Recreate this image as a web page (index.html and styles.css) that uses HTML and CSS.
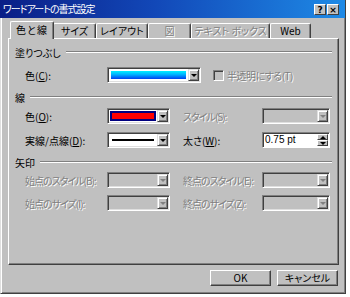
FILE: index.html
```html
<!DOCTYPE html>
<html lang="ja">
<head>
    <meta charset="UTF-8">
    <title>ワードアートの書式設定</title>
    <link rel="stylesheet" href="styles.css">
</head>
<body>

    <div class="dialog">
        <div class="titlebar">
            <span class="title">ワードアートの書式設定</span>
            <div class="title-buttons">
                <span class="tbtn">?</span>
                <span class="tbtn">×</span>
            </div>
        </div>

        <div class="tabs">
            <div class="tab tab-color active">色と線</div>
            <div class="tab tab-size">サイズ</div>
            <div class="tab tab-layout">レイアウト</div>
            <div class="tab tab-pic disabled">図</div>
            <div class="tab tab-text disabled">テキスト ボックス</div>
            <div class="tab tab-web">Web</div>
        </div>

        <div class="panel">
            <!-- 塗りつぶし -->
            <div class="group-head first">塗りつぶし</div>
            <div class="row">
                <span class="lbl">色(<u>C</u>):</span>
                <div class="combo combo-fill">
                    <span class="field"><span class="swatch swatch-fill"></span></span>
                    <span class="drop"><i class="arrow"></i></span>
                </div>
                <span class="check"></span>
                <span class="check-text off">半透明にする(T)</span>
            </div>

            <!-- 線 -->
            <div class="group-head">線</div>
            <div class="row row-line1">
                <span class="lbl">色(<u>O</u>):</span>
                <div class="combo combo-sm">
                    <span class="field"><span class="swatch swatch-red"></span></span>
                    <span class="drop"><i class="arrow"></i></span>
                </div>
                <span class="lbl lbl2 narrow off">スタイル(S):</span>
                <div class="combo combo-r off">
                    <span class="field"></span>
                    <span class="drop"><i class="arrow"></i></span>
                </div>
            </div>
            <div class="row row-line2">
                <span class="lbl">実線/点線(<u>D</u>):</span>
                <div class="combo combo-sm">
                    <span class="field"><span class="dash"></span></span>
                    <span class="drop"><i class="arrow"></i></span>
                </div>
                <span class="lbl lbl2">太さ(<u>W</u>):</span>
                <div class="spin">
                    <span class="spin-value">0.75 pt</span>
                    <span class="spin-btns">
                        <span class="spin-btn"><i class="arrow-up"></i></span>
                        <span class="spin-btn"><i class="arrow"></i></span>
                    </span>
                </div>
            </div>

            <!-- 矢印 -->
            <div class="group-head">矢印</div>
            <div class="row row-arrow1">
                <span class="lbl narrow off">始点のスタイル(B):</span>
                <div class="combo combo-sm off">
                    <span class="field"></span>
                    <span class="drop"><i class="arrow"></i></span>
                </div>
                <span class="lbl lbl2 narrow off">終点のスタイル(E):</span>
                <div class="combo combo-r off">
                    <span class="field"></span>
                    <span class="drop"><i class="arrow"></i></span>
                </div>
            </div>
            <div class="row row-arrow2">
                <span class="lbl narrow off">始点のサイズ(I):</span>
                <div class="combo combo-sm off">
                    <span class="field"></span>
                    <span class="drop"><i class="arrow"></i></span>
                </div>
                <span class="lbl lbl2 narrow off">終点のサイズ(Z):</span>
                <div class="combo combo-r off">
                    <span class="field"></span>
                    <span class="drop"><i class="arrow"></i></span>
                </div>
            </div>
        </div>

        <div class="actions">
            <span class="btn">OK</span>
            <span class="btn">キャンセル</span>
        </div>
    </div>

</body>
</html>
```

FILE: styles.css
```css
* {
    margin: 0;
    padding: 0;
    box-sizing: border-box;
}

body {
    background: #fff;
    font-family: 'Noto Sans CJK JP', 'Noto Sans', sans-serif;
    font-size: 10px;
    font-feature-settings: "palt";
    color: #000;
}

u {
    text-decoration: underline;
}

.dialog {
    width: 346px;
    height: 294px;
    background: #c0c0c0;
    border-left: 1px solid #dfdfdf;
    border-right: 1px solid #404040;
    border-bottom: 1px solid #404040;
    box-shadow: inset 1px 0 #fff, inset -1px -1px #808080;
}


/* title bar */
.titlebar {
    height: 18px;
    margin-left: -1px;
    display: flex;
    align-items: center;
    justify-content: space-between;
    padding: 0 6px 0 3px;
    background: linear-gradient(90deg, #0a1e86 0%, #1248b8 45%, #1e8ae6 100%);
    color: #fff;
}

.title {
    font-size: 10px;
    letter-spacing: -1px;
    line-height: 18px;
}

.title-buttons {
    display: flex;
    gap: 1px;
}

.tbtn {
    width: 12px;
    height: 11px;
    background: #c0c0c0;
    color: #000;
    font-family: 'DejaVu Sans', sans-serif;
    font-size: 9px;
    font-weight: bold;
    line-height: 10px;
    text-align: center;
    border-top: 1px solid #fff;
    border-left: 1px solid #fff;
    border-right: 1px solid #404040;
    border-bottom: 1px solid #404040;
}


/* tabs */
.tabs {
    display: flex;
    align-items: flex-end;
    height: 20px;
    padding-left: 10px;
    position: relative;
    z-index: 1;
}

.tab {
    height: 15px;
    line-height: 13px;
    text-align: center;
    white-space: nowrap;
    border-top: 1px solid #fff;
    border-left: 1px solid #fff;
    border-right: 1px solid #404040;
    border-radius: 2px 2px 0 0;
    box-shadow: inset -1px 0 #808080;
}

.tab.active {
    height: 18px;
    line-height: 16px;
    margin: 0 -1px -1px -1px;
    background: #c0c0c0;
    padding-bottom: 1px;
    position: relative;
    letter-spacing: 1px;
}

.tab.disabled {
    color: #808080;
    text-shadow: 1px 1px #fff;
}

.tab-color { width: 44px; }
.tab-size { width: 43px; }
.tab-layout { width: 52px; }
.tab-pic { width: 43px; }
.tab-text { width: 79px; }
.tab-web { width: 41px; }


/* panel */
.panel {
    width: 331px;
    height: 227px;
    margin-left: 7px;
    border-top: 1px solid #fff;
    border-left: 1px solid #fff;
    border-right: 1px solid #404040;
    border-bottom: 1px solid #404040;
    box-shadow: inset -1px -1px #808080;
}

.group-head {
    display: flex;
    align-items: center;
    height: 14px;
    margin: 7px 6px 0 6px;
}

.group-head.first {
    margin-top: 6px;
}

.group-head::after {
    content: '';
    flex: 1;
    margin-left: 5px;
    border-top: 1px solid #808080;
    border-bottom: 1px solid #fff;
}

.row {
    display: flex;
    align-items: center;
    height: 16px;
    margin-top: 8px;
    padding-left: 16px;
}

.row-line1 { margin-top: 4px; }
.row-arrow1 { margin-top: 3px; }
.row-arrow2 { margin-top: 7px; }

.lbl {
    width: 82px;
    white-space: nowrap;
}

.lbl2 {
    width: 79px;
    margin-left: 13px;
}

.narrow {
    letter-spacing: -1px;
}

.off {
    color: #808080;
    text-shadow: 1px 1px #fff;
}


/* combo boxes */
.combo {
    display: flex;
    height: 16px;
    border: 1px solid;
    border-color: #808080 #fff #fff #808080;
    box-shadow: inset 1px 1px #404040, inset -1px -1px #dfdfdf;
    padding: 1px;
    background: #fff;
}

.combo.off {
    background: #c0c0c0;
}

.combo-fill { width: 94px; }
.combo-sm { width: 63px; }
.combo-r { width: 68px; }

.field {
    flex: 1;
    display: flex;
    align-items: center;
    padding: 1px;
}

.swatch {
    flex: 1;
    height: 100%;
}

.swatch-fill {
    border: 1px solid #fff;
    background: linear-gradient(180deg, #00f0ff 0%, #00b0ff 45%, #0040f0 100%);
}

.swatch-red {
    border: 2px solid #000080;
    background: #ff0000;
}

.dash {
    flex: 1;
    height: 2px;
    margin: 0 2px;
    background: #000;
}

.drop {
    width: 11px;
    display: flex;
    align-items: center;
    justify-content: center;
    background: #c0c0c0;
    border-top: 1px solid #dfdfdf;
    border-left: 1px solid #dfdfdf;
    border-right: 1px solid #404040;
    border-bottom: 1px solid #404040;
    box-shadow: inset 1px 1px #fff, inset -1px -1px #808080;
}

.arrow {
    width: 0;
    height: 0;
    border-left: 3px solid transparent;
    border-right: 3px solid transparent;
    border-top: 3px solid #000;
}

.arrow-up {
    width: 0;
    height: 0;
    border-left: 3px solid transparent;
    border-right: 3px solid transparent;
    border-bottom: 3px solid #000;
}

.off .arrow {
    border-top-color: #808080;
}

.check {
    width: 11px;
    height: 11px;
    margin-left: 12px;
    border: 1px solid;
    border-color: #808080 #fff #fff #808080;
    box-shadow: inset 1px 1px #404040;
    background: #c0c0c0;
}

.check-text {
    margin-left: 3px;
    letter-spacing: -0.5px;
    white-space: nowrap;
}


/* spinner */
.spin {
    display: flex;
    width: 68px;
    height: 16px;
    border: 1px solid;
    border-color: #808080 #fff #fff #808080;
    box-shadow: inset 1px 1px #404040;
    background: #fff;
    padding: 1px;
}

.spin-value {
    flex: 1;
    padding-left: 1px;
    line-height: 12px;
    font-family: 'Liberation Sans', sans-serif;
}

.spin-btns {
    width: 11px;
    display: flex;
    flex-direction: column;
}

.spin-btn {
    flex: 1;
    display: flex;
    align-items: center;
    justify-content: center;
    background: #c0c0c0;
    border-top: 1px solid #fff;
    border-left: 1px solid #fff;
    border-right: 1px solid #404040;
    border-bottom: 1px solid #404040;
}


/* buttons */
.actions {
    display: flex;
    justify-content: flex-end;
    gap: 6px;
    margin-top: 5px;
    padding-right: 7px;
}

.btn {
    width: 61px;
    height: 16px;
    line-height: 14px;
    text-align: center;
    border-top: 1px solid #fff;
    border-left: 1px solid #fff;
    border-right: 1px solid #404040;
    border-bottom: 1px solid #404040;
    box-shadow: inset -1px -1px #808080;
}
```
